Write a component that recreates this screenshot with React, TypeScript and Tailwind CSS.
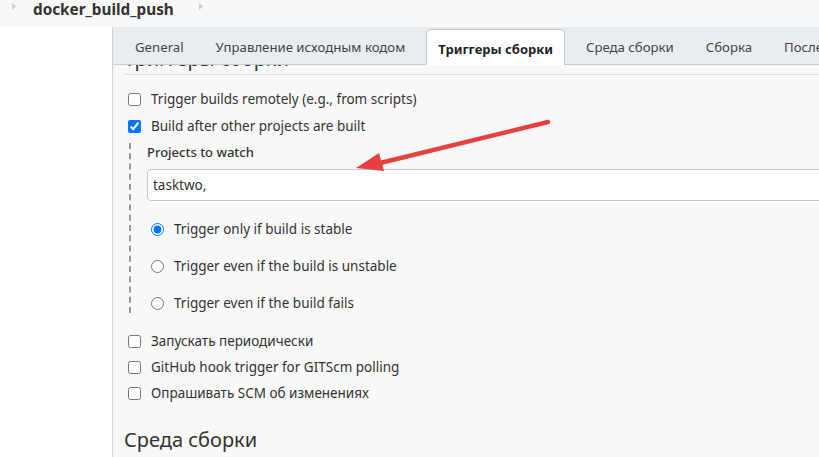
import React from "react";

const font = { fontFamily: '"Noto Sans", "Open Sans", Arial, sans-serif' };

const tabs = [
  "General",
  "Управление исходным кодом",
  "Триггеры сборки",
  "Среда сборки",
  "Сборка",
  "Послесборочные операции",
];

function Caret() {
  return (
    <svg width="4" height="7" viewBox="0 0 4 7" className="mt-[3px] shrink-0">
      <polygon points="0,0 4,3.5 0,7" fill="#cfcfcf" />
    </svg>
  );
}

function Check({ label, checked = false }: { label: string; checked?: boolean }) {
  return (
    <label className="flex h-[26px] items-center gap-[10px] pl-[4px] text-[13.5px] text-[#333]">
      <input type="checkbox" defaultChecked={checked} className="m-0 h-[13px] w-[13px]" />
      <span>{label}</span>
    </label>
  );
}

function Radio({ label, checked = false }: { label: string; checked?: boolean }) {
  return (
    <label className="flex h-[20px] items-center gap-[10px] pl-[4px] text-[13.5px] text-[#333]">
      <input type="radio" name="trigger" defaultChecked={checked} className="m-0 h-[13px] w-[13px]" />
      <span>{label}</span>
    </label>
  );
}

export default function App() {
  return (
    <div className="relative h-[457px] w-[819px] overflow-hidden bg-white" style={font}>
      <div className="flex h-[27px] items-start bg-[#f8f8f8] pl-[12px]">
        <Caret />
        <span className="ml-[17px] text-[15.3px] font-bold leading-[18px] text-[#333]">docker_build_push</span>
        <span className="ml-[25px]">
          <Caret />
        </span>
      </div>

      <div className="flex">
        <div className="w-[112px] shrink-0 bg-white" />
        <div className="min-w-0 flex-1 overflow-hidden border-l border-[#d4d4d4] bg-[#f8f8f8]">
          <div className="flex h-[38px] items-end whitespace-nowrap border-b border-[#c8ccd0] bg-[#e9edf0] pl-[6px]">
            {tabs.map((t) =>
              t === "Триггеры сборки" ? (
                <div
                  key={t}
                  className="-mb-px mx-[5px] flex h-[36px] items-center rounded-t-[5px] border border-b-0 border-[#c3c7cb] bg-white px-[11px] pt-[4px] text-[13px] font-bold text-[#222]"
                >
                  {t}
                </div>
              ) : (
                <div key={t} className="flex h-[37px] items-center px-[16px] pt-[5px] text-[13.2px] text-[#444]">
                  {t}
                </div>
              )
            )}
          </div>

          <div className="pl-[11px]">
            <div className="h-[10px] overflow-hidden border-b border-[#dedede]">
              <div className="mt-[-20px] text-[20px] leading-[28px] text-[#333]">Триггеры сборки</div>
            </div>

            <div className="mt-[11px]">
              <Check label="Trigger builds remotely (e.g., from scripts)" />
              <div className="mt-[1px]">
                <Check label="Build after other projects are built" checked />
              </div>
            </div>

            <div className="ml-[5px] mt-[4px] border-l-2 border-dashed border-[#9a9a9a] pl-[16px] pt-[1px]">
              <div className="flex h-[18px] items-center text-[13px] font-medium text-[#333]">Projects to watch</div>
              <input
                type="text"
                defaultValue="tasktwo,"
                className="mt-[7px] h-[32px] w-[720px] rounded-l-[4px] border border-[#c8c8c8] bg-white px-[5px] text-[13.5px] text-[#333] outline-none"
              />
              <div className="mt-[18px] flex flex-col gap-[17px]">
                <Radio label="Trigger only if build is stable" checked />
                <Radio label="Trigger even if the build is unstable" />
                <Radio label="Trigger even if the build fails" />
              </div>
            </div>

            <div className="mt-[15px]">
              <Check label="Запускать периодически" />
              <Check label="GitHub hook trigger for GITScm polling" />
              <Check label="Опрашивать SCM об изменениях" />
            </div>

            <div className="mt-[20px] border-b border-[#dedede] pb-[3px] text-[20px] leading-[28px] text-[#333]">
              Среда сборки
            </div>
          </div>
        </div>
      </div>

      <svg className="pointer-events-none absolute left-0 top-0" width="819" height="457">
        <line x1="548" y1="122" x2="372" y2="165" stroke="#e5413f" strokeWidth="4.5" strokeLinecap="round" />
        <polygon points="356,168 379,153 384,171" fill="#e5413f" />
      </svg>
    </div>
  );
}
